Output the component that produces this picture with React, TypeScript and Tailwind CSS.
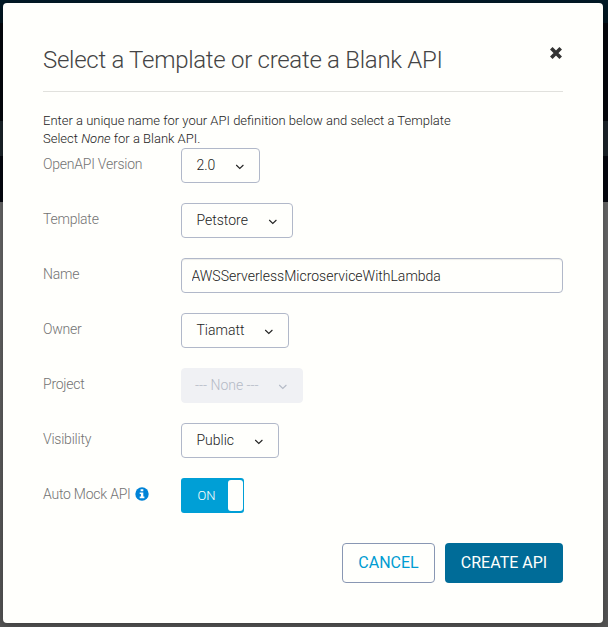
import React from "react";

function Chevron({ className = "" }: { className?: string }) {
  return (
    <svg viewBox="0 0 10 6" className={`h-[6px] w-[10px] shrink-0 ${className}`} fill="none" stroke="currentColor" strokeWidth="1.1">
      <path d="M1.2 1 L4.8 4.5 L8.4 1" />
    </svg>
  );
}

function Select({ value, className, disabled = false }: { value: string; className: string; disabled?: boolean }) {
  const tone = disabled
    ? "border-[#f0f1f4] bg-[#f0f1f4] text-[#b4bac6] pl-[13px]"
    : "border-[#b1b8c9] bg-[#fffffc] text-[#222] pl-[14.5px]";
  return (
    <button
      type="button"
      disabled={disabled}
      className={`flex h-[35px] items-center justify-between rounded-[4px] border pr-[14px] pb-[1px] text-[14px] leading-[20px] ${tone} ${className}`}
    >
      <span className="whitespace-nowrap">{value}</span>
      <Chevron className="mt-[4px]" />
    </button>
  );
}

function Row({ label, children }: { label: React.ReactNode; children: React.ReactNode }) {
  return (
    <div className="flex h-[55px] items-start">
      <div className="flex w-[138px] shrink-0 items-center pt-[6px] text-[14px] leading-[20px] tracking-[-0.23px] whitespace-nowrap text-[#737373]">
        {label}
      </div>
      {children}
    </div>
  );
}

export default function App() {
  return (
    <div className="h-[627px] w-[608px] overflow-hidden bg-[linear-gradient(to_bottom,#021a27_0,#02151f_23px,#05070d_23px,#05070d_121px,#1b2329_121px,#1b2329_156px,#05070f_156px,#05070f_202px,#666_202px,#666_320px,#626262_320px,#555_627px)] p-[3px] font-[Roboto,sans-serif] font-light">
      <div className="h-[620px] w-[600px] rounded-[4px] bg-[#fffffc] px-[40px] shadow-[0_2px_8px_rgba(0,0,0,0.3)]">
        <div className="flex h-[89px] items-start justify-between border-b border-[#e1e1dd]">
          <h1 className="pt-[41px] text-[24px] leading-[32px] tracking-[-0.28px] whitespace-nowrap text-[#444]">
            Select a Template or create a Blank API
          </h1>
          <button type="button" aria-label="Close" className="mt-[44px] mr-[1px]">
            <svg viewBox="0 0 12 12" className="h-[12px] w-[12px]" stroke="#333" strokeWidth="3.6">
              <path d="M1.3 1.3 L10.7 10.7 M10.7 1.3 L1.3 10.7" />
            </svg>
          </button>
        </div>
        <p className="pt-[20px] text-[13px] leading-[18px] whitespace-nowrap text-[#222]">
          Enter a unique name for your API definition below and select a Template
          <br />
          Select <em>None</em> for a Blank API.
        </p>
        <Row label="OpenAPI Version"><Select value="2.0" className="w-[79px]" /></Row>
        <Row label="Template"><Select value="Petstore" className="w-[112px]" /></Row>
        <Row label="Name">
          <input
            type="text"
            defaultValue="AWSServerlessMicroserviceWithLambda"
            className="h-[35px] w-[382px] rounded-[4px] border border-[#b1b8c9] bg-[#fffffc] px-[9.5px] text-[14px] text-[#222] shadow-[inset_0_1px_1px_rgba(0,0,0,0.075)] outline-none"
          />
        </Row>
        <Row label="Owner"><Select value="Tiamatt" className="w-[108px]" /></Row>
        <Row label="Project"><Select value="--- None ---" disabled className="w-[122px]" /></Row>
        <Row label="Visibility"><Select value="Public" className="w-[98px]" /></Row>
        <Row
          label={
            <>
              Auto Mock API
              <svg viewBox="0 0 14 14" className="ml-[4px] h-[14px] w-[14px]">
                <circle cx="7" cy="7" r="6.7" fill="#0083d7" />
                <path d="M5.6 2.2h2.7v2H5.6z M4.7 5.4h3.6v4.2h1.1v1.7H4.7V9.6h1.2V7H4.7z" fill="#fff" />
              </svg>
            </>
          }
        >
          <div className="flex h-[35px] w-[63px] items-center justify-between rounded-[3px] bg-[#009fd6] pr-[1px] pl-[16.5px] text-[13px] font-light text-[#fffffc]">
            <span>ON</span>
            <span className="h-[31px] w-[15px] rounded-[3px] bg-[#fffffc]" />
          </div>
        </Row>
        <div className="flex justify-end gap-[10px] pt-[10px] text-[16px] font-normal">
          <button type="button" className="h-[40px] w-[93px] rounded-[4px] border border-[#8997b3] text-[#009cd2]">
            CANCEL
          </button>
          <button type="button" className="h-[40px] w-[118px] rounded-[4px] bg-[#006c98] text-[#fffffc]">
            CREATE API
          </button>
        </div>
      </div>
    </div>
  );
}
